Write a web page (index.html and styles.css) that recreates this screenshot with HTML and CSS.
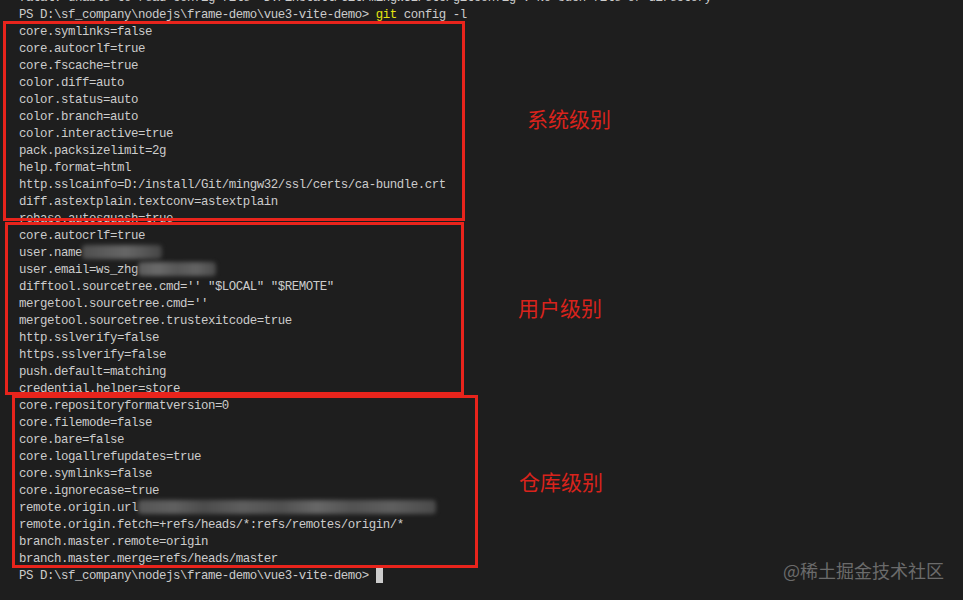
FILE: index.html
```html
<!DOCTYPE html>
<html lang="zh-CN">
<head>
<meta charset="utf-8">
<title>git config -l</title>
<link rel="stylesheet" href="styles.css">
</head>
<body>
<div class="screen">
  <div class="terminal">
<div class="line">fatal: unable to read config file 'D:/install/Git/mingw32/etc/gitconfig': No such file or directory</div>
<div class="line">PS D:\sf_company\nodejs\frame-demo\vue3-vite-demo&gt; <span class="cmd">git</span> config -l</div>
<div class="line">core.symlinks=false</div>
<div class="line">core.autocrlf=true</div>
<div class="line">core.fscache=true</div>
<div class="line">color.diff=auto</div>
<div class="line">color.status=auto</div>
<div class="line">color.branch=auto</div>
<div class="line">color.interactive=true</div>
<div class="line">pack.packsizelimit=2g</div>
<div class="line">help.format=html</div>
<div class="line">http.sslcainfo=D:/install/Git/mingw32/ssl/certs/ca-bundle.crt</div>
<div class="line">diff.astextplain.textconv=astextplain</div>
<div class="line">rebase.autosquash=true</div>
<div class="line">core.autocrlf=true</div>
<div class="line">user.name<span class="blur blur-name"></span></div>
<div class="line">user.email=ws_zhg<span class="blur blur-email"></span></div>
<div class="line">difftool.sourcetree.cmd='' "$LOCAL" "$REMOTE"</div>
<div class="line">mergetool.sourcetree.cmd=''</div>
<div class="line">mergetool.sourcetree.trustexitcode=true</div>
<div class="line">http.sslverify=false</div>
<div class="line">https.sslverify=false</div>
<div class="line">push.default=matching</div>
<div class="line">credential.helper=store</div>
<div class="line">core.repositoryformatversion=0</div>
<div class="line">core.filemode=false</div>
<div class="line">core.bare=false</div>
<div class="line">core.logallrefupdates=true</div>
<div class="line">core.symlinks=false</div>
<div class="line">core.ignorecase=true</div>
<div class="line">remote.origin.url<span class="blur blur-url"></span></div>
<div class="line">remote.origin.fetch=+refs/heads/*:refs/remotes/origin/*</div>
<div class="line">branch.master.remote=origin</div>
<div class="line">branch.master.merge=refs/heads/master</div>
<div class="line">PS D:\sf_company\nodejs\frame-demo\vue3-vite-demo&gt; <span class="cursor"></span></div>
  </div>

  <div class="mark mark-system"></div>
  <div class="mark mark-user"></div>
  <div class="mark mark-repo"></div>

  <div class="label label-system">系统级别</div>
  <div class="label label-user">用户级别</div>
  <div class="label label-repo">仓库级别</div>

  <div class="watermark">@稀土掘金技术社区</div>
</div>
</body>
</html>
```

FILE: styles.css
```css
html, body {
  margin: 0;
  padding: 0;
  background: #1e1e1e;
}

.screen {
  position: relative;
  width: 963px;
  height: 600px;
  overflow: hidden;
  background: #1e1e1e;
}

.terminal {
  display: flex;
  flex-direction: column;
  margin-top: -10px;
  padding-left: 19px;
  font-family: "Liberation Mono", "DejaVu Sans Mono", monospace;
  font-size: 12.4px;
  letter-spacing: -0.44px;
  line-height: 17px;
  color: #cccccc;
}

.line {
  white-space: pre;
  height: 17px;
}

.cmd {
  color: #e5e510;
}

.cursor {
  display: inline-block;
  width: 7px;
  height: 15px;
  vertical-align: -4px;
  background: #cccccc;
}

.blur {
  display: inline-block;
  height: 14px;
  vertical-align: -3px;
  filter: blur(2px);
  border-radius: 4px;
}

.blur-name {
  width: 80px;
  background: linear-gradient(90deg, #4e4e4e 0%, #5c5c5c 30%, #666 55%, #555 80%, #444 100%);
}

.blur-email {
  width: 78px;
  background: linear-gradient(90deg, #5a5a5a 0%, #6a6a6a 25%, #575757 50%, #636363 75%, #4a4a4a 100%);
}

.blur-url {
  width: 298px;
  background: linear-gradient(90deg, #555 0%, #606060 12%, #4c4c4c 22%, #5e5e5e 35%, #505050 48%, #676767 60%, #525252 72%, #5f5f5f 85%, #4a4a4a 100%);
}

.mark {
  position: absolute;
  box-sizing: border-box;
  border: 3px solid #e8241c;
}

.mark-system {
  left: 3px;
  top: 21px;
  width: 462px;
  height: 200px;
}

.mark-user {
  left: 5px;
  top: 222px;
  width: 459px;
  height: 173px;
}

.mark-repo {
  left: 12px;
  top: 395px;
  width: 466px;
  height: 173px;
}

.label {
  position: absolute;
  font-family: "Noto Sans CJK SC", "Noto Sans", sans-serif;
  font-size: 21px;
  line-height: 21px;
  color: #d8231c;
}

.label-system {
  left: 527px;
  top: 108px;
}

.label-user {
  left: 518px;
  top: 297px;
}

.label-repo {
  left: 519px;
  top: 471px;
}

.watermark {
  position: absolute;
  left: 783px;
  top: 560px;
  font-family: "Noto Sans CJK SC", "Noto Sans", sans-serif;
  font-size: 18px;
  line-height: 20px;
  color: #6b6b6b;
}
```
